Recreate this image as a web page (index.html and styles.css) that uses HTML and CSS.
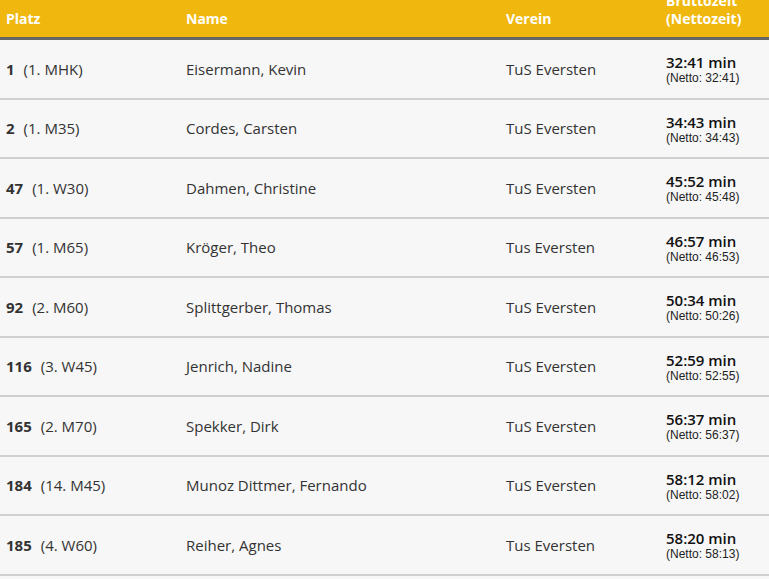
FILE: index.html
```html
<!DOCTYPE html>
<html lang="de">
<head>
<meta charset="utf-8">
<title>Ergebnisse</title>
<link rel="stylesheet" href="styles.css">
</head>
<body>
<div class="results">
  <div class="row head">
    <div class="cell">Platz</div>
    <div class="cell">Name</div>
    <div class="cell">Verein</div>
    <div class="cell">Bruttozeit<br>(Nettozeit)</div>
  </div>
  <div class="row">
    <div class="cell"><b class="rank">1</b>(1. MHK)</div>
    <div class="cell">Eisermann, Kevin</div>
    <div class="cell">TuS Eversten</div>
    <div class="cell time"><span class="brutto">32:41 min</span><span class="netto">(Netto: 32:41)</span></div>
  </div>
  <div class="row">
    <div class="cell"><b class="rank">2</b>(1. M35)</div>
    <div class="cell">Cordes, Carsten</div>
    <div class="cell">TuS Eversten</div>
    <div class="cell time"><span class="brutto">34:43 min</span><span class="netto">(Netto: 34:43)</span></div>
  </div>
  <div class="row">
    <div class="cell"><b class="rank">47</b>(1. W30)</div>
    <div class="cell">Dahmen, Christine</div>
    <div class="cell">TuS Eversten</div>
    <div class="cell time"><span class="brutto">45:52 min</span><span class="netto">(Netto: 45:48)</span></div>
  </div>
  <div class="row">
    <div class="cell"><b class="rank">57</b>(1. M65)</div>
    <div class="cell">Kröger, Theo</div>
    <div class="cell">Tus Eversten</div>
    <div class="cell time"><span class="brutto">46:57 min</span><span class="netto">(Netto: 46:53)</span></div>
  </div>
  <div class="row">
    <div class="cell"><b class="rank">92</b>(2. M60)</div>
    <div class="cell">Splittgerber, Thomas</div>
    <div class="cell">TuS Eversten</div>
    <div class="cell time"><span class="brutto">50:34 min</span><span class="netto">(Netto: 50:26)</span></div>
  </div>
  <div class="row">
    <div class="cell"><b class="rank">116</b>(3. W45)</div>
    <div class="cell">Jenrich, Nadine</div>
    <div class="cell">TuS Eversten</div>
    <div class="cell time"><span class="brutto">52:59 min</span><span class="netto">(Netto: 52:55)</span></div>
  </div>
  <div class="row">
    <div class="cell"><b class="rank">165</b>(2. M70)</div>
    <div class="cell">Spekker, Dirk</div>
    <div class="cell">TuS Eversten</div>
    <div class="cell time"><span class="brutto">56:37 min</span><span class="netto">(Netto: 56:37)</span></div>
  </div>
  <div class="row">
    <div class="cell"><b class="rank">184</b>(14. M45)</div>
    <div class="cell">Munoz Dittmer, Fernando</div>
    <div class="cell">TuS Eversten</div>
    <div class="cell time"><span class="brutto">58:12 min</span><span class="netto">(Netto: 58:02)</span></div>
  </div>
  <div class="row">
    <div class="cell"><b class="rank">185</b>(4. W60)</div>
    <div class="cell">Reiher, Agnes</div>
    <div class="cell">Tus Eversten</div>
    <div class="cell time"><span class="brutto">58:20 min</span><span class="netto">(Netto: 58:13)</span></div>
  </div>
</div>
</body>
</html>
```
FILE: styles.css
```css
html, body {
  margin: 0;
  padding: 0;
  background: #f7f7f7;
}
body {
  font-family: "Open Sans", "Liberation Sans", sans-serif;
  color: #333;
  overflow: hidden;
}
.results {
  margin-top: -17px;
}
.row {
  display: grid;
  grid-template-columns: 180px 320px 160px 1fr;
  align-items: center;
  height: 57.5px;
  border-bottom: 2px solid #d0d0d0;
  font-size: 15px;
}
.cell {
  padding: 0 6px;
  white-space: nowrap;
}
.head {
  height: 36px;
  padding: 9px 0;
  background: #f0b80e;
  color: #fff;
  font-weight: 700;
  font-size: 14px;
  line-height: 18px;
  align-items: end;
  border-bottom: 3px solid #666;
}
.rank {
  font-weight: 700;
  margin-right: 9px;
}
.time {
  display: flex;
  flex-direction: column;
  padding-top: 2px;
}
.brutto {
  font-weight: 600;
  color: #111;
  line-height: 17px;
}
.netto {
  font-family: "Liberation Sans", Arial, sans-serif;
  font-size: 12px;
  line-height: 14px;
  color: #222;
}
```
